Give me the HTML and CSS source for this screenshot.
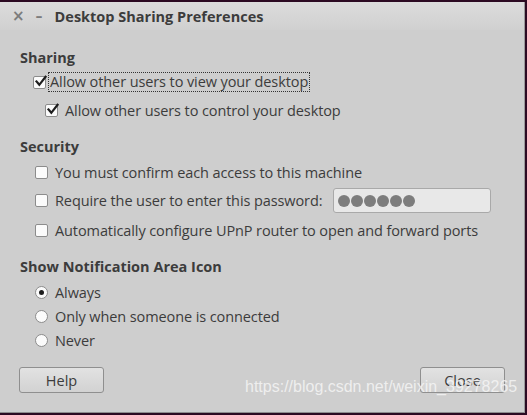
FILE: index.html
```html
<!DOCTYPE html>
<html>
<head>
<meta charset="utf-8">
<link rel="stylesheet" href="styles.css">
</head>
<body>
<div class="window">
  <div class="titlebar">
    <span class="tb-btn tb-close">×</span>
    <span class="tb-btn tb-min">–</span>
    <span class="title">Desktop Sharing Preferences</span>
  </div>
  <div class="content">
    <div class="heading h-sharing">Sharing</div>
    <div class="row row-1">
      <span class="check on"><svg viewBox="0 0 13 13" width="13" height="13"><path d="M2.5 6.5 L5.3 9.8 L11.5 1.8" fill="none" stroke="#1e1e1e" stroke-width="2.2" stroke-linecap="square"/></svg></span>
      <span class="label focus">Allow other users to view your desktop</span>
    </div>
    <div class="row row-2">
      <span class="check on"><svg viewBox="0 0 13 13" width="13" height="13"><path d="M2.5 6.5 L5.3 9.8 L11.5 1.8" fill="none" stroke="#1e1e1e" stroke-width="2.2" stroke-linecap="square"/></svg></span>
      <span class="label">Allow other users to control your desktop</span>
    </div>

    <div class="heading h-security">Security</div>
    <div class="row row-s1">
      <span class="check"></span>
      <span class="label">You must confirm each access to this machine</span>
    </div>
    <div class="row row-s2">
      <span class="check"></span>
      <span class="label">Require the user to enter this password:</span>
      <span class="entry"><i></i><i></i><i></i><i></i><i></i><i></i></span>
    </div>
    <div class="row row-s3">
      <span class="check"></span>
      <span class="label">Automatically configure UPnP router to open and forward ports</span>
    </div>

    <div class="heading h-notify">Show Notification Area Icon</div>
    <div class="row radio-row">
      <span class="radio on"></span>
      <span class="label">Always</span>
    </div>
    <div class="row radio-row">
      <span class="radio"></span>
      <span class="label">Only when someone is connected</span>
    </div>
    <div class="row radio-row">
      <span class="radio"></span>
      <span class="label">Never</span>
    </div>

    <div class="buttons">
      <button class="btn">Help</button>
      <button class="btn">Close</button>
    </div>
  </div>
  <div class="watermark">https://blog.csdn.net/weixin_39278265</div>
</div>
</body>
</html>
```

FILE: styles.css
```css
html, body {
  margin: 0;
  padding: 0;
}
body {
  width: 527px;
  height: 415px;
  background: #2c0a22;
  font-family: "Open Sans", "Noto Sans", sans-serif;
  color: #3c3c3c;
  overflow: hidden;
  position: relative;
}
.window {
  position: relative;
  width: 524px;
  height: 410px;
  margin-top: 2px;
  background: #cecece;
  border-right: 1px solid #9a9a9a;
  border-bottom: 1px solid #8d8d8d;
}
.titlebar {
  height: 28px;
  display: flex;
  align-items: center;
  background: linear-gradient(#dcdcdc, #d0d0d0);
  font-size: 14px;
}
.tb-btn {
  color: #7c7c7c;
  font-family: "DejaVu Sans", sans-serif;
  font-weight: bold;
  line-height: 1;
}
.tb-close {
  margin-left: 12px;
  font-size: 15px;
}
.tb-min {
  margin-left: 11px;
  font-size: 14px;
}
.title {
  margin-left: 12px;
  font-weight: bold;
  font-size: 14.5px;
  color: #3c3c3c;
}
.content {
  padding: 18px 19px 0 19px;
  font-size: 14.5px;
  letter-spacing: -0.1px;
}
.heading {
  font-weight: bold;
  height: 20px;
  line-height: 20px;
  margin-left: 1px;
  letter-spacing: 0;
}
.h-security, .h-notify {
  margin-top: 15px;
}
.row {
  display: flex;
  align-items: center;
  height: 24px;
}
.row-1 {
  margin-top: 2px;
  padding-left: 14px;
}
.row-2 {
  margin-top: 4px;
  padding-left: 26px;
}
.row-s1 {
  margin-top: 3px;
  padding-left: 16px;
}
.row-s2 {
  margin-top: 4px;
  height: 25px;
  padding-left: 16px;
}
.row-s3 {
  margin-top: 5px;
  padding-left: 16px;
}
.check {
  width: 11px;
  height: 11px;
  border: 1px solid #8c8c8c;
  border-radius: 2px;
  background: #fbfbfb;
  position: relative;
  flex: none;
}
.check svg {
  position: absolute;
  left: 0;
  top: -2px;
}
.row .label {
  margin-left: 7px;
  white-space: nowrap;
}
.row-1 .label {
  margin-left: 2px;
}
.focus {
  border: 1px dotted #333;
  padding: 0 1px 0 1px;
  line-height: 18px;
}
.entry {
  margin-left: 11px;
  border: 1px solid #a9a9a9;
  border-radius: 3px;
  background: #e8e8e8;
  display: flex;
  align-items: center;
  padding-left: 4px;
  gap: 1px;
  box-sizing: border-box;
  width: 158px;
  height: 25px;
}
.entry i {
  display: block;
  width: 12px;
  height: 12px;
  border-radius: 50%;
  background: #7d7d7d;
}
.radio-row {
  padding-left: 16px;
}
.h-notify + .radio-row {
  margin-top: 3px;
}
.radio {
  width: 11px;
  height: 11px;
  border: 1px solid #8c8c8c;
  border-radius: 50%;
  background: #fbfbfb;
  position: relative;
  flex: none;
}
.radio.on::after {
  content: "";
  position: absolute;
  left: 3px;
  top: 3px;
  width: 5px;
  height: 5px;
  border-radius: 50%;
  background: #1e1e1e;
}
.buttons {
  display: flex;
  justify-content: space-between;
  margin-top: 15px;
}
.btn {
  width: 85px;
  height: 26px;
  border: 1px solid #8f8f8f;
  border-radius: 3px;
  background: linear-gradient(#e2e2e2, #d2d2d2);
  font-family: "Open Sans", "Noto Sans", sans-serif;
  font-size: 14.5px;
  color: #3c3c3c;
  padding: 0;
}
.watermark {
  position: absolute;
  left: 245px;
  top: 376px;
  font-family: "Liberation Sans", Arial, sans-serif;
  font-size: 16px;
  color: rgba(245, 245, 245, 0.85);
  white-space: nowrap;
}
```
